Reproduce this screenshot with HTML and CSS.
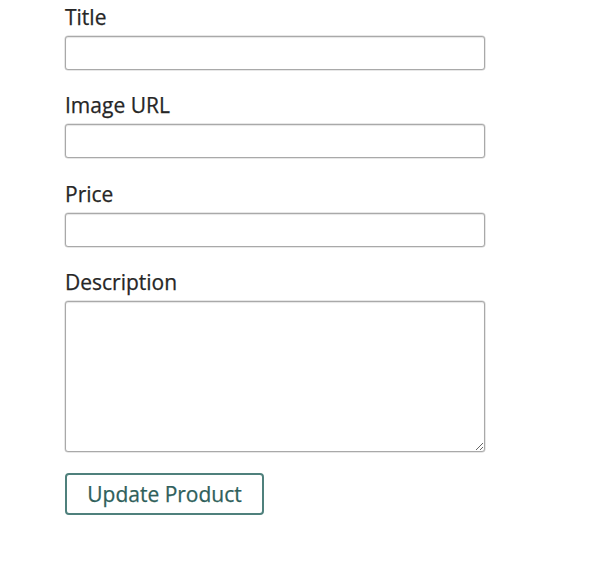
FILE: index.html
```html
<!DOCTYPE html>
<html>
<head>
<meta charset="utf-8">
<link rel="stylesheet" href="styles.css">
</head>
<body>
<form class="form">
  <label class="label" for="title">Title</label>
  <input class="field" id="title" type="text">
  <label class="label" for="image">Image URL</label>
  <input class="field" id="image" type="text">
  <label class="label" for="price">Price</label>
  <input class="field" id="price" type="text">
  <label class="label" for="desc">Description</label>
  <textarea class="field area" id="desc"></textarea>
  <button class="btn" type="button">Update Product</button>
</form>
</body>
</html>
```
FILE: styles.css
```css
html, body {
  margin: 0;
  padding: 0;
  background: #ffffff;
}
body {
  font-family: "Open Sans", "Liberation Sans", sans-serif;
  color: #262626;
}
.form {
  display: flex;
  flex-direction: column;
  align-items: flex-start;
  padding: 3px 0 0 65px;
  width: 420px;
}
.label {
  display: block;
  font-size: 21px;
  line-height: 28px;
  margin-bottom: 5px;
  color: #262626;
  -webkit-text-stroke: 0.25px #262626;
}
.field {
  box-sizing: border-box;
  width: 420px;
  height: 34px;
  margin: 0 0 21.3px 0;
  border: 1px solid #a9a9a9;
  border-radius: 3px;
  box-shadow: inset 0 1px 1px rgba(0,0,0,0.1), 0 0 0 0.5px #d0d0d0;
  background: #ffffff;
  font-family: inherit;
  font-size: 16px;
  padding: 4px 8px;
}
.area {
  height: 151px;
  resize: vertical;
  margin-bottom: 21px;
}
.btn {
  box-sizing: border-box;
  width: 199px;
  height: 42px;
  border: 2px solid #4f807c;
  border-radius: 4px;
  background: #ffffff;
  color: #2f5f5b;
  font-family: "Open Sans", "Liberation Sans", sans-serif;
  font-size: 21px;
  -webkit-text-stroke: 0.25px #2f5f5b;
  padding: 0;
  cursor: pointer;
}
```
